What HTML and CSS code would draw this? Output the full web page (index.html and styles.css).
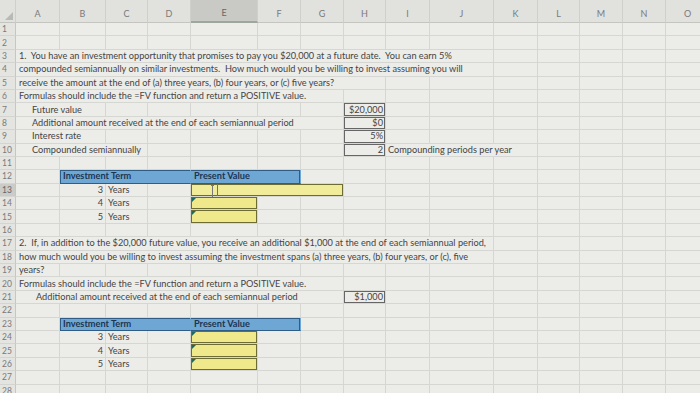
FILE: index.html
```html
<!DOCTYPE html>
<html lang="en">
<head>
    <meta charset="UTF-8">
    <meta name="viewport" content="width=device-width, initial-scale=1.0">
    <title>Present Value Worksheet</title>
    <link rel="stylesheet" href="styles.css">
</head>
<body>
    <table class="sheet">
        <colgroup>
            <col class="w-rh"><col class="w-a"><col class="w-b"><col class="w-c"><col class="w-d">
            <col class="w-e"><col class="w-f"><col class="w-g"><col class="w-h"><col class="w-i">
            <col class="w-j"><col class="w-k"><col class="w-l"><col class="w-m"><col class="w-n"><col class="w-o">
        </colgroup>
        <thead>
            <tr class="head-row">
                <th class="corner"><span class="corner-mark"></span></th>
                <th>A</th><th>B</th><th>C</th><th>D</th><th class="sel-col">E</th><th>F</th><th>G</th>
                <th>H</th><th>I</th><th>J</th><th>K</th><th>L</th><th>M</th><th>N</th><th>O</th>
            </tr>
        </thead>
        <tbody>
            <tr><th>1</th><td></td><td></td><td></td><td></td><td></td><td></td><td></td><td></td><td></td><td></td><td></td><td></td><td></td><td></td><td></td></tr>
            <tr><th>2</th><td></td><td></td><td></td><td></td><td></td><td></td><td></td><td></td><td></td><td></td><td></td><td></td><td></td><td></td><td></td></tr>
            <tr><th>3</th><td colspan="10" class="txt">1.&nbsp; You have an investment opportunity that promises to pay you $20,000 at a future date.&nbsp; You can earn 5%</td><td></td><td></td><td></td><td></td><td></td></tr>
            <tr><th>4</th><td colspan="10" class="txt">compounded semiannually on similar investments.&nbsp; How much would you be willing to invest assuming you will</td><td></td><td></td><td></td><td></td><td></td></tr>
            <tr><th>5</th><td colspan="8" class="txt">receive the amount at the end of (a) three years, (b) four years, or (c) five years?</td><td></td><td></td><td></td><td></td><td></td><td></td><td></td></tr>
            <tr><th>6</th><td colspan="7" class="txt">Formulas should include the =FV function and return a POSITIVE value.</td><td></td><td></td><td></td><td></td><td></td><td></td><td></td><td></td></tr>
            <tr><th>7</th><td colspan="2" class="txt ind">Future value</td><td></td><td></td><td></td><td></td><td></td><td class="num box">$20,000</td><td></td><td></td><td></td><td></td><td></td><td></td><td></td></tr>
            <tr><th>8</th><td colspan="7" class="txt ind">Additional amount received at the end of each semiannual period</td><td class="num box">$0</td><td></td><td></td><td></td><td></td><td></td><td></td><td></td></tr>
            <tr><th>9</th><td colspan="2" class="txt ind">Interest rate</td><td></td><td></td><td></td><td></td><td></td><td class="num box">5%</td><td></td><td></td><td></td><td></td><td></td><td></td><td></td></tr>
            <tr><th>10</th><td colspan="3" class="txt ind">Compounded semiannually</td><td></td><td></td><td></td><td></td><td class="num box">2</td><td colspan="3" class="txt tight">Compounding periods per year</td><td></td><td></td><td></td><td></td></tr>
            <tr><th>11</th><td></td><td></td><td></td><td></td><td></td><td></td><td></td><td></td><td></td><td></td><td></td><td></td><td></td><td></td><td></td></tr>
            <tr><th>12</th><td></td><td colspan="3" class="band band-left">Investment Term</td><td colspan="2" class="band band-right">Present Value</td><td></td><td></td><td></td><td></td><td></td><td></td><td></td><td></td><td></td></tr>
            <tr><th class="sel-row">13</th><td></td><td class="num">3</td><td class="txt tight">Years</td><td></td><td colspan="3" class="answer editing"><span class="edit-line"></span><span class="ibeam"></span></td><td></td><td></td><td></td><td></td><td></td><td></td><td></td><td></td></tr>
            <tr><th>14</th><td></td><td class="num">4</td><td class="txt tight">Years</td><td></td><td class="answer flag"></td><td></td><td></td><td></td><td></td><td></td><td></td><td></td><td></td><td></td><td></td></tr>
            <tr><th>15</th><td></td><td class="num">5</td><td class="txt tight">Years</td><td></td><td class="answer flag"></td><td></td><td></td><td></td><td></td><td></td><td></td><td></td><td></td><td></td><td></td></tr>
            <tr><th>16</th><td></td><td></td><td></td><td></td><td></td><td></td><td></td><td></td><td></td><td></td><td></td><td></td><td></td><td></td><td></td></tr>
            <tr><th>17</th><td colspan="10" class="txt">2.&nbsp; If, in addition to the $20,000 future value, you receive an additional $1,000 at the end of each semiannual period,</td><td></td><td></td><td></td><td></td><td></td></tr>
            <tr><th>18</th><td colspan="10" class="txt">how much would you be willing to invest assuming the investment spans (a) three years, (b) four years, or (c), five</td><td></td><td></td><td></td><td></td><td></td></tr>
            <tr><th>19</th><td class="txt">years?</td><td></td><td></td><td></td><td></td><td></td><td></td><td></td><td></td><td></td><td></td><td></td><td></td><td></td><td></td></tr>
            <tr><th>20</th><td colspan="7" class="txt">Formulas should include the =FV function and return a POSITIVE value.</td><td></td><td></td><td></td><td></td><td></td><td></td><td></td><td></td></tr>
            <tr><th>21</th><td colspan="7" class="txt ind-wide">Additional amount received at the end of each semiannual period</td><td class="num box">$1,000</td><td></td><td></td><td></td><td></td><td></td><td></td><td></td></tr>
            <tr><th>22</th><td></td><td></td><td></td><td></td><td></td><td></td><td></td><td></td><td></td><td></td><td></td><td></td><td></td><td></td><td></td></tr>
            <tr><th>23</th><td></td><td colspan="3" class="band band-left">Investment Term</td><td colspan="2" class="band band-right">Present Value</td><td></td><td></td><td></td><td></td><td></td><td></td><td></td><td></td><td></td></tr>
            <tr><th>24</th><td></td><td class="num">3</td><td class="txt tight">Years</td><td></td><td class="answer flag"></td><td></td><td></td><td></td><td></td><td></td><td></td><td></td><td></td><td></td><td></td></tr>
            <tr><th>25</th><td></td><td class="num">4</td><td class="txt tight">Years</td><td></td><td class="answer flag"></td><td></td><td></td><td></td><td></td><td></td><td></td><td></td><td></td><td></td><td></td></tr>
            <tr><th>26</th><td></td><td class="num">5</td><td class="txt tight">Years</td><td></td><td class="answer flag"></td><td></td><td></td><td></td><td></td><td></td><td></td><td></td><td></td><td></td><td></td></tr>
            <tr><th>27</th><td></td><td></td><td></td><td></td><td></td><td></td><td></td><td></td><td></td><td></td><td></td><td></td><td></td><td></td><td></td></tr>
            <tr><th>28</th><td></td><td></td><td></td><td></td><td></td><td></td><td></td><td></td><td></td><td></td><td></td><td></td><td></td><td></td><td></td></tr>
        </tbody>
    </table>
</body>
</html>
```

FILE: styles.css
```css
body {
    margin: 0;
    padding: 0;
    background: #ecece9;
    overflow: hidden;
    font-family: Lato, "Liberation Sans", sans-serif;
    color: #444;
}

.sheet {
    table-layout: fixed;
    width: 710px;
    border-collapse: separate;
    border-spacing: 0;
    font-size: 9.2px;
}

.w-rh { width: 16px; }
.w-a { width: 44px; }
.w-b { width: 46px; }
.w-c { width: 42px; }
.w-d { width: 43px; }
.w-e { width: 67px; }
.w-f { width: 43px; }
.w-g { width: 43px; }
.w-h { width: 42px; }
.w-i { width: 44px; }
.w-j { width: 64px; }
.w-k { width: 44px; }
.w-l { width: 42px; }
.w-m { width: 43px; }
.w-n { width: 43px; }
.w-o { width: 44px; }

/* column letters */
.head-row {
    height: 23px;
}

.head-row th {
    background: #e1e1de;
    border-right: 1px solid #cfcfcc;
    border-bottom: 1px solid #c4c4c0;
    font-weight: normal;
    color: #7a7a7a;
    font-size: 9px;
    vertical-align: bottom;
    padding: 0 0 2px 0;
    line-height: 12px;
}

.head-row th.sel-col {
    background: #c9cac5;
    border-bottom: 2px solid #9ea79b;
    color: #666;
}

.corner {
    position: relative;
}

.corner-mark {
    position: absolute;
    right: 2px;
    bottom: 2px;
    border-left: 8px solid transparent;
    border-bottom: 8px solid #b9b9b5;
}

tbody tr {
    height: 13.4px;
}

tbody th {
    background: #e4e4e1;
    border-right: 1px solid #c6c6c2;
    border-bottom: 1px solid #d4d4d1;
    font-weight: normal;
    font-size: 8.5px;
    color: #7a7a7a;
    text-align: left;
    padding: 0 0 0 2px;
    line-height: 12px;
}

tbody th.sel-row {
    background: #cbccc7;
    color: #666;
}

td {
    border-right: 1px solid #d6d6d3;
    border-bottom: 1px solid #d6d6d3;
    padding: 0;
    line-height: 12px;
    white-space: nowrap;
    overflow: hidden;
}

.txt {
    padding-left: 3px;
}

.txt.tight {
    padding-left: 2px;
}

.txt.ind {
    padding-left: 16px;
}

.txt.ind-wide {
    padding-left: 20px;
}

.num {
    text-align: right;
    padding-right: 2px;
}

.box {
    box-shadow: inset 0 0 0 1px #666;
}

/* blue table header */
.band {
    background: #6fa7d4;
    color: #1d3550;
    font-weight: bold;
    padding-left: 3px;
    border-right-color: #6fa7d4;
    border-bottom-color: #2f5d86;
}

.band-left {
    box-shadow: inset 1px 1px 0 #2f5d86;
}

.band-right {
    box-shadow: inset -1px 1px 0 #2f5d86;
}

/* answer cells */
.answer {
    background: #efe98c;
    box-shadow: inset 0 0 0 1px #6e6c35;
    position: relative;
    overflow: visible;
}

.answer.editing {
    background: #f1ec9a;
}

.edit-line {
    position: absolute;
    left: 26px;
    top: 0;
    bottom: 0;
    border-left: 1px solid #777450;
}

.ibeam {
    position: absolute;
    left: 20px;
    top: 1px;
    width: 3px;
    height: 12px;
    border-top: 1px solid #777;
    border-bottom: 1px solid #777;
}

.ibeam::after {
    content: '';
    position: absolute;
    left: 1px;
    top: 0;
    bottom: 0;
    border-left: 1px solid #777;
}

.flag::before {
    content: '';
    position: absolute;
    left: 1px;
    top: 1px;
    border-top: 4px solid #1f6a5c;
    border-right: 4px solid transparent;
}
```
